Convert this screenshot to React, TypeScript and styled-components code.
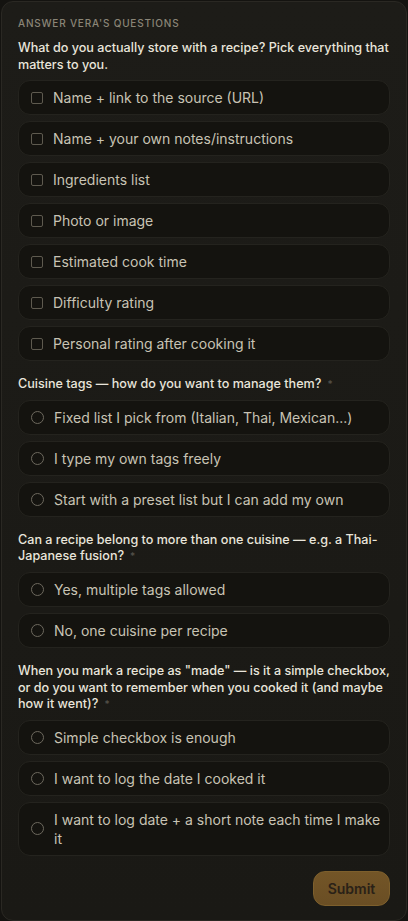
import styled, { createGlobalStyle } from "styled-components";

const GlobalStyle = createGlobalStyle`
  * { box-sizing: border-box; }
  body {
    margin: 0;
    background: #141310;
    font-family: Inter, "Noto Sans", sans-serif;
  }
`;

const Card = styled.div`
  margin: 1px;
  min-height: 919px;
  background: linear-gradient(#1d1c18, #1a1915);
  border: 1px solid #2a2823;
  border-radius: 12px;
  padding: 14px 16px 14px 16px;
  display: flex;
  flex-direction: column;
`;

const Header = styled.div`
  font-size: 10px;
  letter-spacing: 0.8px;
  text-transform: uppercase;
  color: #8a8577;
  font-weight: 500;
  line-height: 14px;
  margin-bottom: 10px;
`;

const Group = styled.div`
  display: flex;
  flex-direction: column;
  gap: 6px;
  margin-bottom: 15px;
`;

const Question = styled.div`
  font-size: 12.6px;
  font-weight: 500;
  line-height: 16.6px;
  color: #e9e5db;
  margin-bottom: 1px;
`;

const Required = styled.span`
  color: #55524b;
  font-size: 10px;
  line-height: 0;
  margin-left: 6px;
`;

const Option = styled.label`
  display: flex;
  align-items: center;
  gap: 10px;
  min-height: 35px;
  padding: 7px 8px 7px 12px;
  background: #14130f;
  border: 1px solid #24231e;
  border-radius: 12px;
  font-size: 14px;
  line-height: 19px;
  color: #c8c3b4;
  cursor: pointer;
`;

const Box = styled.span<{ $round?: boolean }>`
  flex: none;
  width: ${(p) => (p.$round ? 13 : 12)}px;
  height: ${(p) => (p.$round ? 13 : 12)}px;
  border: 1.5px solid ${(p) => (p.$round ? "#6d695e" : "#5e5a4f")};
  border-radius: ${(p) => (p.$round ? "50%" : "2px")};
`;

const Footer = styled.div`
  display: flex;
  justify-content: flex-end;
`;

const Submit = styled.button`
  width: 77px;
  height: 35px;
  border: 1px solid #7d5f2c;
  border-radius: 12px;
  background: linear-gradient(#735527, #6a4e24);
  color: #2a2117;
  font-family: inherit;
  font-size: 14px;
  font-weight: 600;
  cursor: pointer;
`;

const questions: { text: string; multi: boolean; required: boolean; options: string[] }[] = [
  {
    text: "What do you actually store with a recipe? Pick everything that matters to you.",
    multi: true,
    required: false,
    options: [
      "Name + link to the source (URL)",
      "Name + your own notes/instructions",
      "Ingredients list",
      "Photo or image",
      "Estimated cook time",
      "Difficulty rating",
      "Personal rating after cooking it",
    ],
  },
  {
    text: "Cuisine tags \u2014 how do you want to manage them?",
    multi: false,
    required: true,
    options: [
      "Fixed list I pick from (Italian, Thai, Mexican...)",
      "I type my own tags freely",
      "Start with a preset list but I can add my own",
    ],
  },
  {
    text: "Can a recipe belong to more than one cuisine \u2014 e.g. a Thai-Japanese fusion?",
    multi: false,
    required: true,
    options: ["Yes, multiple tags allowed", "No, one cuisine per recipe"],
  },
  {
    text: 'When you mark a recipe as "made" \u2014 is it a simple checkbox, or do you want to remember when you cooked it (and maybe how it went)?',
    multi: false,
    required: true,
    options: [
      "Simple checkbox is enough",
      "I want to log the date I cooked it",
      "I want to log date + a short note each time I make it",
    ],
  },
];

const App = () => {
  return (
    <>
      <GlobalStyle />
      <Card>
        <Header>Answer Vera's questions</Header>
        {questions.map((q) => (
          <Group key={q.text}>
            <Question>
              {q.text}
              {q.required && <Required>*</Required>}
            </Question>
            {q.options.map((o) => (
              <Option key={o}>
                <Box $round={!q.multi} />
                {o}
              </Option>
            ))}
          </Group>
        ))}
        <Footer>
          <Submit>Submit</Submit>
        </Footer>
      </Card>
    </>
  );
};

export default App;
